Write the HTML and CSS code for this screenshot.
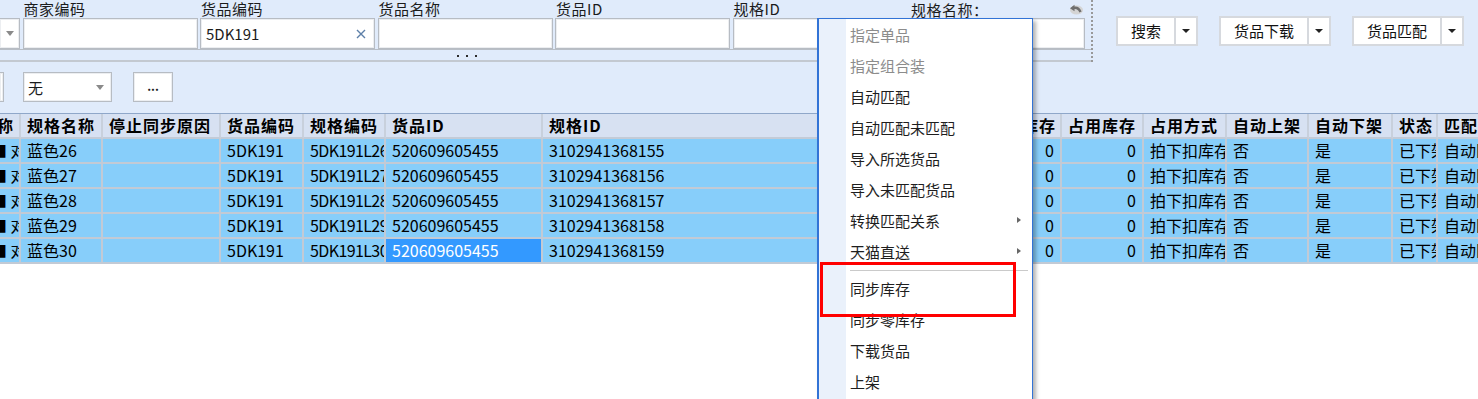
FILE: index.html
```html
<!DOCTYPE html>
<html lang="zh-CN">
<head>
  <meta charset="UTF-8">
  <title>货品匹配</title>
  <link rel="stylesheet" href="styles.css">
</head>
<body>

<div class="top">
  <div class="top-row">
    <div class="filter-box">
      <div class="fields">
        <div class="field narrow">
          <label></label>
          <div class="box combo cut-left"><span class="arrow"></span></div>
        </div>
        <div class="field"><label>商家编码</label><div class="box"></div></div>
        <div class="field">
          <label>货品编码</label>
          <div class="box">5DK191
            <svg class="clear" width="10" height="10" viewBox="0 0 10 10"><path d="M1 1 L9 9 M9 1 L1 9" stroke="#5d7fa8" stroke-width="1.4"/></svg>
          </div>
        </div>
        <div class="field"><label>货品名称</label><div class="box"></div></div>
        <div class="field"><label>货品ID</label><div class="box"></div></div>
        <div class="field"><label>规格ID</label><div class="box"></div></div>
        <div class="field">
          <label class="with-icon">规格名称：
            <svg width="16" height="12" viewBox="0 0 16 12"><ellipse cx="8.5" cy="7" rx="6.5" ry="4.5" fill="#d4d4d4"/><path d="M12.5 9 Q10.5 3.5 5 5" stroke="#6f6f6f" stroke-width="2.4" fill="none"/><path d="M2 5.2 L6.5 1.8 L6.5 8.2 Z" fill="#6f6f6f"/></svg>
          </label>
          <div class="box"></div>
        </div>
      </div>
      <div class="splitter">
        <span class="dot"></span><span class="dot"></span><span class="dot"></span>
      </div>
    </div>

    <div class="actions">
      <div class="split-btn"><span class="main">搜索</span><span class="drop"><i class="tri"></i></span></div>
      <div class="split-btn"><span class="main">货品下载</span><span class="drop"><i class="tri"></i></span></div>
      <div class="split-btn"><span class="main">货品匹配</span><span class="drop"><i class="tri"></i></span></div>
    </div>
  </div>

  <div class="row2">
    <div class="box stub"></div>
    <div class="box combo wu">无<span class="arrow"></span></div>
    <div class="box more">...</div>
  </div>
</div>

<div class="grid">
  <div class="grid-row head">
    <div class="cell first">称</div>
    <div class="cell">规格名称</div>
    <div class="cell">停止同步原因</div>
    <div class="cell">货品编码</div>
    <div class="cell">规格编码</div>
    <div class="cell">货品ID</div>
    <div class="cell">规格ID</div>
    <div class="cell">条码</div>
    <div class="cell">可用库存</div>
    <div class="cell">占用库存</div>
    <div class="cell">占用方式</div>
    <div class="cell">自动上架</div>
    <div class="cell">自动下架</div>
    <div class="cell">状态</div>
    <div class="cell">匹配方式</div>
  </div>

  <div class="grid-row">
    <div class="cell first">■ 对</div>
    <div class="cell">蓝色26</div>
    <div class="cell"></div>
    <div class="cell">5DK191</div>
    <div class="cell code">5DK191L26</div>
    <div class="cell">520609605455</div>
    <div class="cell">3102941368155</div>
    <div class="cell"></div>
    <div class="cell num">0</div>
    <div class="cell num">0</div>
    <div class="cell">拍下扣库存</div>
    <div class="cell">否</div>
    <div class="cell">是</div>
    <div class="cell">已下架</div>
    <div class="cell">自动匹配</div>
  </div>

  <div class="grid-row">
    <div class="cell first">■ 对</div>
    <div class="cell">蓝色27</div>
    <div class="cell"></div>
    <div class="cell">5DK191</div>
    <div class="cell code">5DK191L27</div>
    <div class="cell">520609605455</div>
    <div class="cell">3102941368156</div>
    <div class="cell"></div>
    <div class="cell num">0</div>
    <div class="cell num">0</div>
    <div class="cell">拍下扣库存</div>
    <div class="cell">否</div>
    <div class="cell">是</div>
    <div class="cell">已下架</div>
    <div class="cell">自动匹配</div>
  </div>

  <div class="grid-row">
    <div class="cell first">■ 对</div>
    <div class="cell">蓝色28</div>
    <div class="cell"></div>
    <div class="cell">5DK191</div>
    <div class="cell code">5DK191L28</div>
    <div class="cell">520609605455</div>
    <div class="cell">3102941368157</div>
    <div class="cell"></div>
    <div class="cell num">0</div>
    <div class="cell num">0</div>
    <div class="cell">拍下扣库存</div>
    <div class="cell">否</div>
    <div class="cell">是</div>
    <div class="cell">已下架</div>
    <div class="cell">自动匹配</div>
  </div>

  <div class="grid-row">
    <div class="cell first">■ 对</div>
    <div class="cell">蓝色29</div>
    <div class="cell"></div>
    <div class="cell">5DK191</div>
    <div class="cell code">5DK191L29</div>
    <div class="cell">520609605455</div>
    <div class="cell">3102941368158</div>
    <div class="cell"></div>
    <div class="cell num">0</div>
    <div class="cell num">0</div>
    <div class="cell">拍下扣库存</div>
    <div class="cell">否</div>
    <div class="cell">是</div>
    <div class="cell">已下架</div>
    <div class="cell">自动匹配</div>
  </div>

  <div class="grid-row">
    <div class="cell first">■ 对</div>
    <div class="cell">蓝色30</div>
    <div class="cell"></div>
    <div class="cell">5DK191</div>
    <div class="cell code">5DK191L30</div>
    <div class="cell selected">520609605455</div>
    <div class="cell">3102941368159</div>
    <div class="cell"></div>
    <div class="cell num">0</div>
    <div class="cell num">0</div>
    <div class="cell">拍下扣库存</div>
    <div class="cell">否</div>
    <div class="cell">是</div>
    <div class="cell">已下架</div>
    <div class="cell">自动匹配</div>
  </div>
</div>

<!-- menu contextuel -->
<div class="ctx-menu">
  <div class="item off">指定单品</div>
  <div class="item off">指定组合装</div>
  <div class="item">自动匹配</div>
  <div class="item">自动匹配未匹配</div>
  <div class="item">导入所选货品</div>
  <div class="item">导入未匹配货品</div>
  <div class="item">转换匹配关系<i class="sub"></i></div>
  <div class="item">天猫直送<i class="sub"></i></div>
  <div class="sep"></div>
  <div class="item">同步库存</div>
  <div class="item">同步零库存</div>
  <div class="item">下载货品</div>
  <div class="item">上架</div>
</div>

<div class="mark"></div>

</body>
</html>
```

FILE: styles.css
```css
html, body {
  overflow: hidden;
}
body {
  margin: 0;
  height: 399px;
  position: relative;
  font-family: "Noto Sans CJK SC", "Noto Sans", sans-serif;
  font-size: 15px;
  color: #1b1b1b;
  background: #fff;
}

/* zone de filtres */
.top {
  background: #e0ebfb;
  height: 113px;
}
.top-row {
  display: flex;
}
.filter-box {
  width: 1091px;
  height: 62px;
  border-right: 2px dotted #999;
}
.fields {
  display: flex;
  gap: 2.5px;
  height: 49px;
}
.field {
  width: 175px;
  display: flex;
  flex-direction: column;
}
.field.narrow {
  width: 20px;
}
.field label {
  height: 18px;
  line-height: 17px;
  padding-left: 1px;
  white-space: nowrap;
  letter-spacing: 0.5px;
}
.field label.with-icon {
  display: flex;
  justify-content: space-between;
  align-items: center;
  padding-right: 1px;
}
.box {
  box-sizing: border-box;
  height: 31px;
  background: #fff;
  border: 1px solid #b7bcc3;
  box-shadow: inset 0 0 0 1px #eceef1;
  display: flex;
  align-items: center;
  padding: 0 5px;
}
.box.cut-left {
  border-left: none;
  padding: 0;
  justify-content: center;
}
.clear {
  margin-left: auto;
  margin-right: 3px;
}
.arrow {
  width: 0;
  height: 0;
  border-left: 4.5px solid transparent;
  border-right: 4.5px solid transparent;
  border-top: 5px solid #8a8a8a;
}
.splitter {
  height: 5px;
  border-top: 1px solid #b8bec6;
  border-bottom: 2px solid #c3c9d1;
  display: flex;
  gap: 7px;
  padding: 5px 0 0 457px;
}
.dot {
  width: 2px;
  height: 2px;
  background: #2b2b2b;
}

.actions {
  display: flex;
  gap: 21px;
  padding: 16px 0 0 23px;
}
.split-btn {
  display: flex;
  height: 30px;
  box-sizing: border-box;
  border: 2px solid #d6d9de;
  background: #fff;
}
.split-btn .main {
  padding: 0 13px;
  line-height: 25px;
  color: #111;
}
.split-btn .drop {
  width: 20px;
  border-left: 2px solid #d6d9de;
  display: flex;
  align-items: center;
  justify-content: center;
}
.tri {
  width: 0;
  height: 0;
  border-left: 4px solid transparent;
  border-right: 4px solid transparent;
  border-top: 4px solid #222;
}

.row2 {
  display: flex;
  padding-top: 10px;
}
.row2 .box {
  height: 30px;
}
.stub {
  width: 4px;
  padding: 0;
  border-left: none;
}
.combo.wu {
  width: 89px;
  margin-left: 19px;
  padding: 0 7px 0 4px;
  justify-content: space-between;
}
.more {
  width: 40px;
  margin-left: 21px;
  justify-content: center;
  font-size: 12px;
  font-weight: bold;
  padding: 0 0 4px;
}

/* grille */
.grid {
  width: 1520px;
  border-top: 1px solid #8fa7c9;
}
.grid-row {
  display: grid;
  grid-template-columns: 21px 82px 118px 83px 82px 157px 317px 122px 80px 82px 83px 82px 84px 45px 82px;
  background: #87cefa;
  font-size: 16px;
  color: #000;
}
.cell {
  box-sizing: border-box;
  height: 25px;
  line-height: 23px;
  padding: 0 6px;
  border-right: 2px solid #c2cad5;
  border-bottom: 2px solid #c2cad5;
  white-space: nowrap;
  overflow: hidden;
}
.grid-row.head {
  background: #d7e1f2;
  font-weight: bold;
  letter-spacing: 1px;
}
.grid-row.head .cell {
  border-right-color: #c8d0dc;
  border-bottom-color: #c3cbd7;
}
.cell.first {
  padding: 0;
  text-indent: -9px;
}
.head .cell.first {
  text-indent: -3px;
}
.cell.code {
  letter-spacing: -0.6px;
}
.cell.num {
  text-align: right;
}
.cell.selected {
  background: #3399ff;
  color: #fff;
}

/* menu contextuel */
.ctx-menu {
  position: absolute;
  left: 817px;
  top: 18px;
  width: 216px;
  height: 400px;
  box-sizing: border-box;
  padding-top: 1px;
  background: linear-gradient(to right, #eaf1fb 27px, #fff 27px);
  border: 1px solid #3273d6;
  border-left-width: 2px;
  box-shadow: 3px 3px 4px rgba(0, 0, 0, 0.3);
}
.item {
  box-sizing: border-box;
  height: 31px;
  display: flex;
  align-items: center;
  padding: 0 11px 3px 31px;
  color: #1e1e1e;
}
.item.off {
  color: #8c8c8c;
}
.sub {
  margin-left: auto;
  width: 0;
  height: 0;
  border-top: 3.5px solid transparent;
  border-bottom: 3.5px solid transparent;
  border-left: 4px solid #666;
}
.sep {
  margin: 2px 4px 3px 31px;
  border-top: 1px solid #cacaca;
}

.mark {
  position: absolute;
  left: 820px;
  top: 262px;
  width: 196px;
  height: 55px;
  box-sizing: border-box;
  border: 3px solid #ff0000;
}
```
